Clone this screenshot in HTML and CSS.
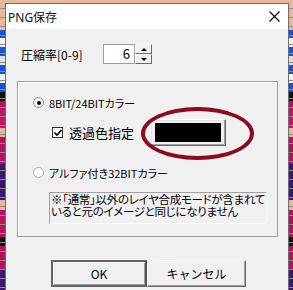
FILE: index.html
```html
<!DOCTYPE html>
<html lang="ja">
<head>
  <meta charset="UTF-8">
  <meta name="viewport" content="width=device-width, initial-scale=1.0">
  <title>PNG保存</title>
  <link rel="stylesheet" href="styles.css">
</head>
<body>
  <div class="dialog">
    <div class="titlebar">
      <span class="title">PNG保存</span>
      <svg class="close" width="11" height="11" viewBox="0 0 11 11">
        <path d="M0.5 0.5 L10.5 10.5 M10.5 0.5 L0.5 10.5" stroke="#000" stroke-width="1.1" fill="none"/>
      </svg>
    </div>

    <div class="client">
      <div class="level-row">
        <span class="level-label">圧縮率[0-9]</span>
        <div class="spin">
          <div class="spin-edit">6</div>
          <div class="spin-btns">
            <span class="spin-btn"><i class="arrow-up"></i></span>
            <span class="spin-btn"><i class="arrow-down"></i></span>
          </div>
        </div>
      </div>

      <div class="group">
        <div class="opt">
          <span class="radio on"></span>
          <span class="opt-label">8BIT/24BITカラー</span>
        </div>

        <div class="check-row">
          <span class="check">
            <svg width="8" height="8" viewBox="0 0 8 8">
              <path d="M0.5 3.5 L3 6 L7.5 1" stroke="#000" stroke-width="1.6" fill="none"/>
            </svg>
          </span>
          <span class="check-label">透過色指定</span>
          <div class="color-btn"><div class="swatch"></div></div>
        </div>

        <div class="opt opt-alpha">
          <span class="radio"></span>
          <span class="opt-label">アルファ付き32BITカラー</span>
        </div>

        <div class="note">※「通常」以外のレイヤ合成モードが含まれていると元のイメージと同じになりません</div>

        <div class="ring"></div>
      </div>

      <div class="buttons">
        <button type="button" class="btn btn-default">OK</button>
        <button type="button" class="btn">キャンセル</button>
      </div>
    </div>
  </div>
</body>
</html>
```

FILE: styles.css
```css
html, body {
  margin: 0;
  height: 100%;
  overflow: hidden;
}

body {
  font-family: "Noto Sans CJK JP", "Noto Sans", sans-serif;
  font-size: 12px;
  color: #000;
  background:
    repeating-linear-gradient(to bottom, transparent 0 8px, #8c8c8c 8px 9px),
    linear-gradient(to bottom,
      #e7b89a 0 30px, #1f52c9 30px 38px, #f2f2f2 38px 47px, #1f52c9 47px 56px,
      #e0e0e0 56px 65px, #1f52c9 65px 74px, #f2f2f2 74px 83px, #1f52c9 83px 92px,
      #111 92px 101px, #b3125e 101px 110px, #c41466 110px 128px, #e7b89a 128px 137px,
      #b3125e 137px 164px, #3a176e 164px 200px, #e7b89a 200px 210px, #b3125e 210px 237px,
      #111 237px 246px, #b3125e 246px 270px, #3a176e 270px 290px);
}

.dialog {
  margin: 3px 0 0 5px;
  width: 282px;
  height: 286px;
  border: 1px solid #6e6e6e;
  border-bottom: none;
  background: #f0f0f0;
}

.titlebar {
  height: 25px;
  background: #fff;
  display: flex;
  align-items: center;
  padding: 0 7px 0 2px;
}

.title {
  font-family: "Noto Sans", "Noto Sans CJK JP", sans-serif;
  font-size: 12px;
  flex: 1;
  color: #111;
}

.close {
  margin-right: 1px;
}

.client {
  padding: 15px 0 0 15px;
}

/* compression level */
.level-row {
  display: flex;
  align-items: center;
  height: 20px;
}

.level-label {
  width: 82px;
}

.spin {
  display: flex;
  height: 20px;
}

.spin-edit {
  width: 26px;
  height: 18px;
  padding-right: 4px;
  border: 1px solid #a0a0a0;
  background: #fff;
  text-align: right;
  line-height: 17px;
  font-size: 13px;
}

.spin-btns {
  display: flex;
  flex-direction: column;
  width: 17px;
  height: 20px;
}

.spin-btn {
  flex: 1;
  box-sizing: border-box;
  border: 1px solid;
  border-color: #fff #696969 #696969 #fff;
  background: #f0f0f0;
  display: flex;
  align-items: center;
  justify-content: center;
}

.arrow-up, .arrow-down {
  width: 0;
  height: 0;
  border-left: 3px solid transparent;
  border-right: 3px solid transparent;
}

.arrow-up {
  border-bottom: 3px solid #000;
}

.arrow-down {
  border-top: 3px solid #000;
}

/* group box */
.group {
  position: relative;
  margin: 17px 0 0 -4px;
  width: 244px;
  border: 1px solid #a0a0a0;
  box-shadow: inset 1px 1px 0 #fff;
  padding: 15px 0 12px 15px;
}

.opt {
  display: flex;
  align-items: center;
  height: 11px;
}

.opt-label {
  margin-left: 5px;
  font-size: 11px;
  font-feature-settings: "palt";
}

.radio {
  box-sizing: border-box;
  width: 11px;
  height: 11px;
  border-radius: 50%;
  border: 1px solid #a8a8a8;
  background: #fff;
  display: flex;
  align-items: center;
  justify-content: center;
}

.radio.on {
  border-color: #8a8a8a;
}

.radio.on::after {
  content: "";
  width: 4px;
  height: 4px;
  border-radius: 50%;
  background: #000;
}

.check-row {
  display: flex;
  align-items: center;
  height: 27px;
  margin: 11px 0 0 19px;
}

.check {
  box-sizing: border-box;
  width: 11px;
  height: 11px;
  border: 1px solid #333;
  background: #fff;
  display: flex;
  align-items: center;
  justify-content: center;
}

.check-label {
  width: 81px;
  margin-left: 6px;
  font-size: 13px;
  font-feature-settings: "palt";
}

.color-btn {
  box-sizing: border-box;
  width: 76px;
  height: 27px;
  border: 1px solid;
  border-color: #fff #696969 #696969 #fff;
  box-shadow: inset -1px -1px 0 #a0a0a0, inset 1px 1px 0 #e3e3e3;
  background: #f0f0f0;
  padding: 3px 4px;
}

.swatch {
  height: 19px;
  background: #000;
}

.opt-alpha {
  margin-top: 21px;
}

.note {
  box-sizing: border-box;
  margin: 14px 0 0 16px;
  width: 218px;
  height: 32px;
  border: 1px solid;
  border-color: #a0a0a0 #fff #fff #a0a0a0;
  padding: 0 0 0 1px;
  font-size: 11.5px;
  line-height: 12px;
  letter-spacing: -0.3px;
  font-feature-settings: "palt";
}

/* red marker round the colour button */
.ring {
  position: absolute;
  left: 123px;
  top: 25px;
  width: 105px;
  height: 45px;
  border: 4px solid #8a0a1f;
  border-radius: 50%;
}

/* bottom buttons */
.buttons {
  display: flex;
  margin: 23px 0 0 30px;
}

.btn {
  box-sizing: border-box;
  height: 27px;
  padding: 0;
  background: #f0f0f0;
  font-family: "Noto Sans CJK JP", "Noto Sans", sans-serif;
  font-size: 12px;
  color: #000;
  width: 99px;
  border: 1px solid;
  border-color: #fff #696969 #696969 #fff;
  box-shadow: inset -1px -1px 0 #a0a0a0;
}

.btn-default {
  width: 96px;
  border: 2px solid #646464;
  border-right-color: #545454;
  box-shadow: inset 1px 1px 0 #fff, inset -1px -1px 0 #a0a0a0;
}
```
